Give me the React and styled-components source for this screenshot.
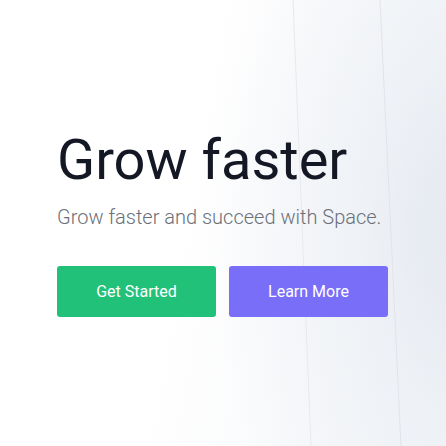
import React from 'react';
import styled, { createGlobalStyle } from 'styled-components';

const GlobalStyle = createGlobalStyle`
  html, body {
    margin: 0;
    padding: 0;
  }
  body {
    font-family: Roboto, "Liberation Sans", sans-serif;
  }
`;

const Hero = styled.section`
  position: relative;
  width: 446px;
  height: 446px;
  overflow: hidden;
  box-sizing: border-box;
  padding: 132px 0 0 57px;
  display: flex;
  flex-direction: column;
  background:
    radial-gradient(ellipse 260px 420px at 470px 230px, #e4e9f0 0%, rgba(233, 237, 243, 0.6) 45%, rgba(255, 255, 255, 0) 100%),
    linear-gradient(100deg, #ffffff 40%, #f3f5f8 100%);
`;

const Lines = styled.svg`
  position: absolute;
  inset: 0;
  pointer-events: none;
`;

const Content = styled.div`
  position: relative;
  z-index: 1;
`;

const Title = styled.h1`
  margin: 0;
  font-size: 56px;
  font-weight: 400;
  line-height: 56px;
  color: #141824;
`;

const Subtitle = styled.p`
  margin: 17px 0 0;
  font-size: 20px;
  line-height: 24px;
  font-weight: 300;
  color: #6b7078;
`;

const Actions = styled.div`
  display: flex;
  gap: 13px;
  margin-top: 37px;
`;

const Button = styled.button`
  width: 159px;
  height: 51px;
  border: none;
  border-radius: 3px;
  background: ${(p) => p.bg};
  color: #ffffff;
  font-family: Roboto, "Liberation Sans", sans-serif;
  font-size: 16px;
  font-weight: 400;
  cursor: pointer;
`;

const App = () => {
  return (
    <>
      <GlobalStyle />
      <Hero>
        <Lines width="446" height="446" viewBox="0 0 446 446">
          <line x1="293" y1="0" x2="311" y2="446" stroke="#e6e9ee" strokeWidth="1" />
          <line x1="380" y1="0" x2="401" y2="446" stroke="#e0e4ea" strokeWidth="1" />
        </Lines>
        <Content>
          <Title>Grow faster</Title>
          <Subtitle>Grow faster and succeed with Space.</Subtitle>
          <Actions>
            <Button bg="#22c179">Get Started</Button>
            <Button bg="#786ef8">Learn More</Button>
          </Actions>
        </Content>
      </Hero>
    </>
  );
};

export default App;
